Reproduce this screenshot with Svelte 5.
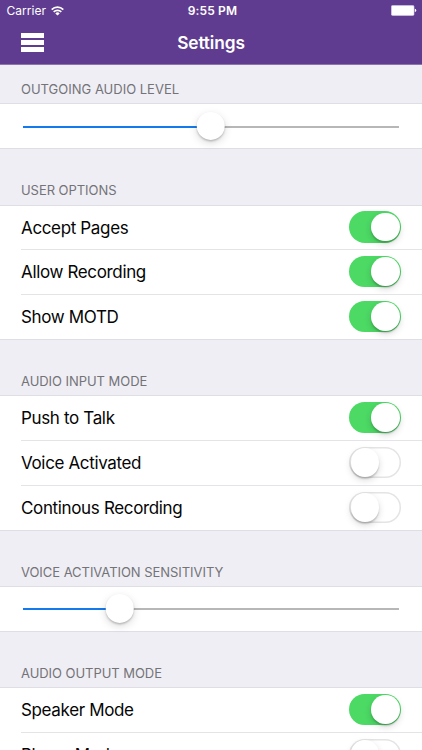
<script>
  const sections = [
    { title: 'Outgoing Audio Level', slider: 50 },
    {
      title: 'User Options',
      rows: [
        { label: 'Accept Pages', on: true },
        { label: 'Allow Recording', on: true },
        { label: 'Show MOTD', on: true }
      ]
    },
    {
      title: 'Audio Input Mode',
      rows: [
        { label: 'Push to Talk', on: true },
        { label: 'Voice Activated', on: false },
        { label: 'Continous Recording', on: false }
      ]
    },
    { title: 'Voice Activation Sensitivity', slider: 25.8 },
    {
      title: 'Audio Output Mode',
      rows: [
        { label: 'Speaker Mode', on: true },
        { label: 'Phone Mode', on: false }
      ]
    }
  ];
</script>

<div class="screen">
  <header>
    <div class="status">
      <div class="carrier">
        <span>Carrier</span>
        <svg width="13" height="10" viewBox="0 0 13 10" fill="none" stroke="#fff" stroke-width="1.7">
          <path d="M.7 3.6a8.2 8.2 0 0 1 11.6 0M2.7 5.9a5.3 5.3 0 0 1 7.6 0" />
          <path d="M6.5 9.6 4.3 7.4a3.1 3.1 0 0 1 4.4 0z" fill="#fff" stroke="none" />
        </svg>
      </div>
      <span class="time">9:55 PM</span>
      <svg class="battery" width="26" height="11" viewBox="0 0 26 11">
        <rect x="0.4" y="0.4" width="22.6" height="10" rx="1.2" fill="#fff" stroke="#d9cfe8" stroke-width=".6" />
        <path d="M23.8 3.7q1.5.3 1.5 1.7t-1.5 1.7z" fill="#fff" />
      </svg>
    </div>
    <div class="nav">
      <button class="menu" aria-label="Menu"><i></i><i></i><i></i></button>
      <h1>Settings</h1>
    </div>
  </header>

  <main>
    {#each sections as section}
      <section>
        <h2>{section.title}</h2>
        <div class="list">
          {#if section.rows}
            {#each section.rows as row}
              <div class="row">
                <span>{row.label}</span>
                <div class="switch" class:on={row.on}><b></b></div>
              </div>
            {/each}
          {:else}
            <div class="row">
              <div class="track">
                <div class="fill" style="width: {section.slider}%"></div>
                <div class="thumb" style="left: {section.slider}%"></div>
              </div>
            </div>
          {/if}
        </div>
      </section>
    {/each}
  </main>
</div>

<style>
  .screen {
    width: 422px;
    height: 750px;
    overflow: hidden;
    background: #efeef4;
    font-family: Inter, 'Liberation Sans', sans-serif;
    color: #050505;
  }
  header {
    height: 65.2px;
    box-sizing: border-box;
    background: #5f3c90;
    border-bottom: 1px solid #8e74ae;
    color: #fff;
  }
  .status {
    display: grid;
    grid-template-columns: 1fr auto 1fr;
    align-items: center;
    height: 21px;
    padding: 0 5.5px 0 6.5px;
    font-size: 12px;
  }
  .carrier {
    display: flex;
    align-items: center;
    gap: 5px;
    letter-spacing: 0.05px;
  }
  .time {
    padding-left: 2px;
    font-weight: 600;
    letter-spacing: 0.15px;
  }
  .battery {
    justify-self: end;
  }
  .nav {
    display: grid;
    grid-template-columns: 1fr auto 1fr;
    align-items: center;
    height: 44px;
    padding: 0 20.5px;
    box-sizing: border-box;
  }
  .menu {
    display: flex;
    flex-direction: column;
    gap: 2px;
    width: 23px;
    padding: 0;
    margin-top: -2px;
    border: 0;
    background: none;
  }
  .menu i {
    width: 23px;
    height: 5px;
    background: #fff;
  }
  h1 {
    margin: 0 0 1px;
    font-size: 17.3px;
    font-weight: 600;
    letter-spacing: -0.1px;
  }
  h2 {
    display: flex;
    align-items: flex-end;
    height: 56.3px;
    box-sizing: border-box;
    margin: 0;
    padding: 0 21px 6.5px;
    font-size: 13px;
    line-height: 16px;
    font-weight: 400;
    letter-spacing: -0.05px;
    text-transform: uppercase;
    color: #737378;
  }
  section:first-child h2 {
    height: 38.25px;
    letter-spacing: 0;
  }
  .list {
    background: #fff;
    box-shadow: 0 1px #dfdee4, inset 0 1px #dfdee4;
  }
  .row {
    display: flex;
    align-items: center;
    justify-content: space-between;
    position: relative;
    height: 44.85px;
    box-sizing: border-box;
    padding: 0 20.5px 0 21px;
    font-size: 17px;
    letter-spacing: -0.35px;
  }
  .row > span {
    padding-top: 1.3px;
  }
  .row + .row::before {
    content: '';
    position: absolute;
    top: 0;
    left: 21px;
    right: 0;
    height: 1px;
    background: #e4e3e8;
  }
  .switch {
    display: flex;
    width: 52px;
    height: 31.5px;
    margin: -0.5px 0.3px 0 0;
    border-radius: 16px;
    box-sizing: border-box;
    background: #fff;
    box-shadow: inset 0 0 0 1.5px #e4e4e4;
  }
  .switch b {
    display: block;
    width: 28.5px;
    height: 28.5px;
    margin: 1.5px;
    border-radius: 50%;
    background: #fff;
    box-shadow: 0 3px 7px rgba(0, 0, 0, 0.15), 0 2px 1.5px rgba(0, 0, 0, 0.16);
  }
  .switch.on {
    justify-content: flex-end;
    background: #4cd964;
    box-shadow: none;
  }
  .track {
    position: relative;
    flex: 1;
    height: 2px;
    margin: 1.6px 2.5px 0 1.5px;
    background: #b7b7b7;
  }
  .fill {
    height: 100%;
    background: #1479ea;
  }
  .thumb {
    position: absolute;
    top: 50%;
    width: 28.5px;
    height: 28.5px;
    transform: translate(-50%, -53%);
    border-radius: 50%;
    background: #fff;
    box-shadow: 0 3px 8px rgba(0, 0, 0, 0.15), 0 1.5px 2px rgba(0, 0, 0, 0.2);
  }
</style>
